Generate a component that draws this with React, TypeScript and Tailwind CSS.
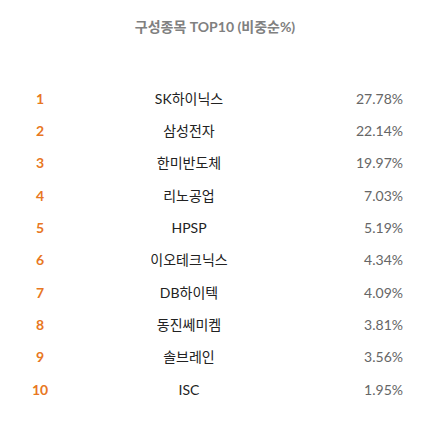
import React from "react";

const rows: [string, string][] = [
  ["SK하이닉스", "27.78%"],
  ["삼성전자", "22.14%"],
  ["한미반도체", "19.97%"],
  ["리노공업", "7.03%"],
  ["HPSP", "5.19%"],
  ["이오테크닉스", "4.34%"],
  ["DB하이텍", "4.09%"],
  ["동진쎄미켐", "3.81%"],
  ["솔브레인", "3.56%"],
  ["ISC", "1.95%"],
];

export default function App() {
  return (
    <div
      className="w-[430px] h-[421px] bg-white"
      style={{ fontFamily: "Lato, 'Noto Sans CJK KR', sans-serif" }}
    >
      <div className="pt-[17px] h-[20px] box-content text-center text-[14px] leading-[20px] font-bold text-[#808080]">
        구성종목 TOP10 (비중순%)
      </div>
      <div className="mt-[45px] pl-5 pr-[27px]">
        {rows.map(([name, pct], i) => (
          <div
            key={name}
            className="grid grid-cols-[40px_258px_1fr] h-[32.33px] items-center text-[14px]"
          >
            <div className="text-center font-bold text-[#e87722]">{i + 1}</div>
            <div className="text-center text-[#222]">{name}</div>
            <div className="text-right text-[#666]">{pct}</div>
          </div>
        ))}
      </div>
    </div>
  );
}
